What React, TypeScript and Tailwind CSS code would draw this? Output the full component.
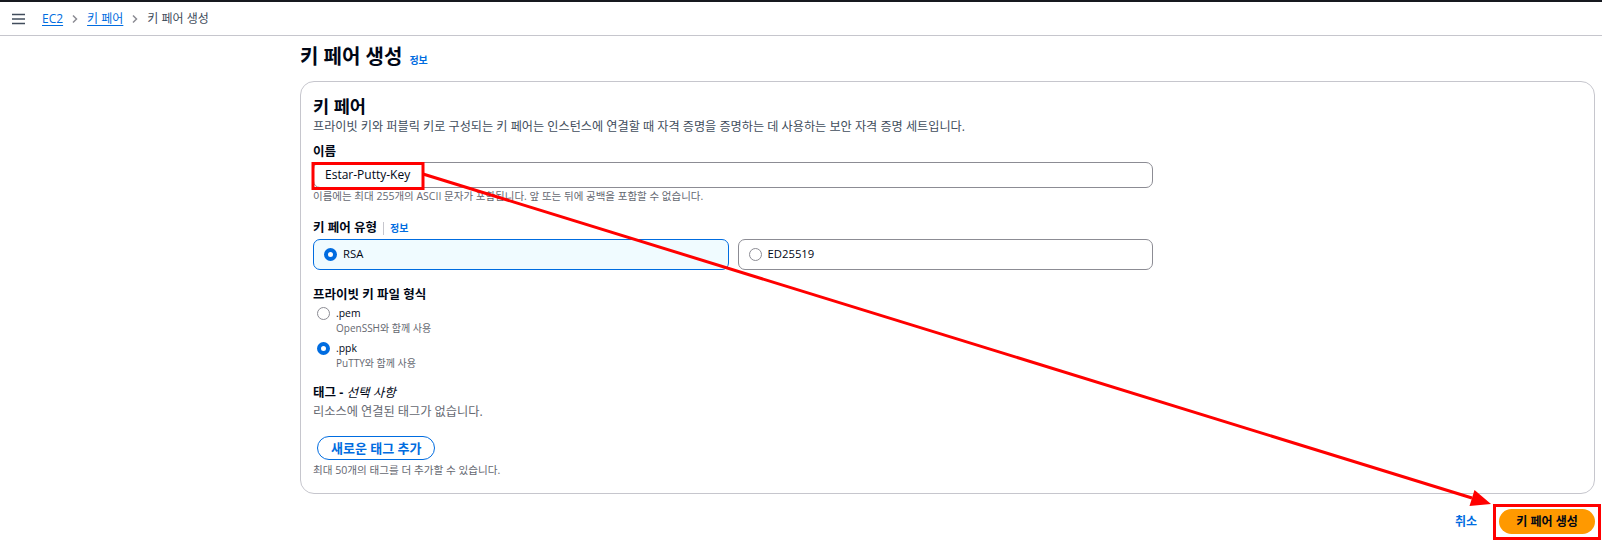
import React from "react";

const font = { fontFamily: '"Open Sans", "Noto Sans CJK KR", sans-serif' };

function Radio({ checked }: { checked: boolean }) {
  return checked ? (
    <span className="w-[13px] h-[13px] rounded-full border-[4px] border-[#006ce0] bg-white shrink-0" />
  ) : (
    <span className="w-[13px] h-[13px] rounded-full border-[1.5px] border-[#8c8c94] bg-white shrink-0" />
  );
}

function Chevron() {
  return (
    <svg width="10" height="10" viewBox="0 0 10 10" className="text-[#8c8c94]">
      <path d="M3 1.5 L6.5 5 L3 8.5" fill="none" stroke="currentColor" strokeWidth="1.5" />
    </svg>
  );
}

export default function App() {
  return (
    <div className="relative w-full h-[549px] bg-white text-[#000716] overflow-hidden" style={font}>
      {/* top bar */}
      <div className="h-[2px] bg-[#16191f]" />
      <header className="h-[34px] flex items-center border-b border-[#c6c6cd] px-[12px]">
        <svg width="13" height="12" viewBox="0 0 13 12" className="text-[#414d5c]">
          <path d="M0 1.5 H13 M0 6 H13 M0 10.5 H13" stroke="currentColor" strokeWidth="1.6" />
        </svg>
        <nav className="flex items-center ml-[17px] text-[12px] gap-[7px]">
          <span className="text-[#006ce0] underline underline-offset-2">EC2</span>
          <Chevron />
          <span className="text-[#006ce0] underline underline-offset-2">키 페어</span>
          <Chevron />
          <span className="text-[#414d5c]">키 페어 생성</span>
        </nav>
      </header>

      <main className="pl-[300px] pr-[7px] pt-[9px]">
        <div className="flex items-baseline gap-[7px]">
          <h1 className="text-[20px] leading-[24px] font-bold">키 페어 생성</h1>
          <span className="text-[10px] font-bold text-[#006ce0]">정보</span>
        </div>

        <section className="mt-[12px] border border-[#c6c6cd] rounded-[14px] px-[12px] pt-[14px] pb-[16px]">
          <h2 className="text-[17.5px] leading-[20px] font-bold">키 페어</h2>
          <p className="mt-[3px] text-[12.15px] leading-[16px] text-[#414d5c]">
            프라이빗 키와 퍼블릭 키로 구성되는 키 페어는 인스턴스에 연결할 때 자격 증명을 증명하는 데 사용하는 보안 자격 증명 세트입니다.
          </p>

          <div className="w-[840px]">
            <label className="block mt-[9px] text-[12.5px] leading-[16px] font-bold">이름</label>
            <div className="mt-[2px] h-[26px] border border-[#8c8c94] rounded-[7px] flex items-center px-[11px] text-[12px]">
              Estar-Putty-Key
            </div>
            <p className="mt-[1px] text-[10.5px] leading-[14px] text-[#656871]">
              이름에는 최대 255개의 ASCII 문자가 포함됩니다. 앞 또는 뒤에 공백을 포함할 수 없습니다.
            </p>

            <div className="mt-[17px] flex items-center text-[12.5px] leading-[16px]">
              <span className="font-bold">키 페어 유형</span>
              <span className="mx-[6px] h-[13px] w-px bg-[#c6c6cd]" />
              <span className="font-bold text-[#006ce0] text-[10px]">정보</span>
            </div>
            <div className="mt-[3px] grid grid-cols-2 gap-[9px]">
              <div className="h-[31px] rounded-[7px] border border-[#006ce0] bg-[#f0fbff] flex items-center gap-[6px] px-[10px] text-[11.3px]">
                <Radio checked />
                <span>RSA</span>
              </div>
              <div className="h-[31px] rounded-[7px] border border-[#8c8c94] flex items-center gap-[6px] px-[10px] text-[11.3px]">
                <Radio checked={false} />
                <span>ED25519</span>
              </div>
            </div>

            <div className="mt-[17px] text-[12.5px] leading-[16px] font-bold">프라이빗 키 파일 형식</div>
            <div className="mt-[2px] flex flex-col gap-[5px]">
              <div className="flex gap-[6px] pl-[4px]">
                <div className="h-[16px] flex items-center"><Radio checked={false} /></div>
                <div>
                  <div className="text-[10.4px] leading-[16px]">.pem</div>
                  <div className="text-[10px] leading-[14px] text-[#656871]">OpenSSH와 함께 사용</div>
                </div>
              </div>
              <div className="flex gap-[6px] pl-[4px]">
                <div className="h-[16px] flex items-center"><Radio checked /></div>
                <div>
                  <div className="text-[10.4px] leading-[16px]">.ppk</div>
                  <div className="text-[10px] leading-[14px] text-[#656871]">PuTTY와 함께 사용</div>
                </div>
              </div>
            </div>

            <div className="mt-[15px] text-[12.5px] leading-[16px]">
              <span className="font-bold">태그 - </span>
              <i>선택 사항</i>
            </div>
            <p className="mt-[3px] text-[12.2px] leading-[16px] text-[#656871]">리소스에 연결된 태그가 없습니다.</p>

            <button className="mt-[16px] ml-[4px] h-[24px] px-[13px] rounded-full border-[1.5px] border-[#006ce0] text-[#006ce0] text-[13px] leading-none font-bold">
              새로운 태그 추가
            </button>
            <p className="mt-[3px] text-[10.6px] leading-[14px] text-[#656871]">최대 50개의 태그를 더 추가할 수 있습니다.</p>
          </div>
        </section>

        <div className="mt-[15px] flex items-center justify-end gap-[22px]">
          <span className="text-[12px] font-bold text-[#006ce0]">취소</span>
          <button className="h-[25px] w-[96px] rounded-full bg-[#ff9900] text-[12px] font-bold text-[#000716]">
            키 페어 생성
          </button>
        </div>
      </main>

      {/* red annotations */}
      <svg className="absolute inset-0 pointer-events-none" width="1602" height="549">
        <rect x="313" y="163.5" width="110" height="25" fill="none" stroke="#ff0000" strokeWidth="3" />
        <rect x="1494.5" y="505.5" width="105" height="33" fill="none" stroke="#ff0000" strokeWidth="3" />
        <line x1="423" y1="174" x2="1472" y2="498" stroke="#ff0000" strokeWidth="3" />
        <polygon points="1491,504 1469.5,506 1474.5,490" fill="#ff0000" />
      </svg>
    </div>
  );
}
